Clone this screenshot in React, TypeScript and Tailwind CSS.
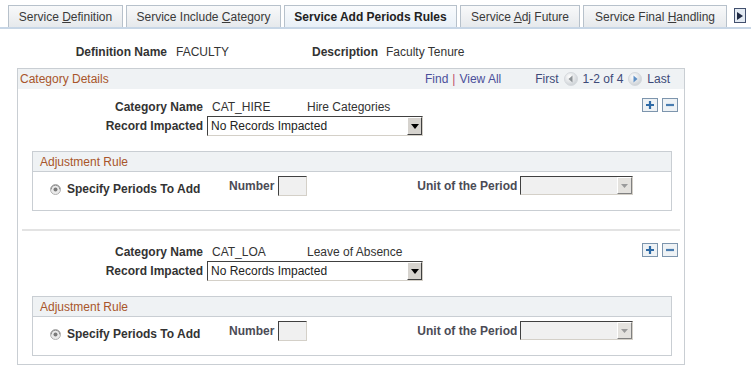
import React from "react";

type TabDef = { pre: string; key?: string; post: string; w: string; active?: boolean };

const tabs: TabDef[] = [
  { pre: "Service ", key: "D", post: "efinition", w: "w-[115px]" },
  { pre: "Service Include ", key: "C", post: "ategory", w: "w-[155px]" },
  { pre: "Service Add Periods Rules", post: "", w: "w-[173px]", active: true },
  { pre: "Service ", key: "A", post: "dj Future", w: "w-[120px]" },
  { pre: "Service Final ", key: "H", post: "andling", w: "w-[144px]" },
];

function Tab({ t }: { t: TabDef }) {
  return (
    <div
      className={`flex h-[22px] items-center justify-center border border-b-0 border-[#b7c1cb] text-[12px] ${t.w} ${
        t.active
          ? "bg-gradient-to-b from-[#f9fbfd] to-[#e9f0f7] font-bold text-[#222]"
          : "bg-gradient-to-b from-[#f8f9fa] to-[#e6e9ec] text-[#3a3a3a]"
      }`}
    >
      <span>
        {t.pre}
        {t.key && <u>{t.key}</u>}
        {t.post}
      </span>
    </div>
  );
}

function NavCircle({ dir }: { dir: "left" | "right" }) {
  return (
    <svg width="14" height="14" viewBox="0 0 14 14" className="mx-[5px]">
      <defs>
        <radialGradient id={`g-${dir}`} cx="40%" cy="35%" r="70%">
          <stop offset="0%" stopColor="#ffffff" />
          <stop offset="100%" stopColor="#c9ced3" />
        </radialGradient>
      </defs>
      <circle cx="7" cy="7" r="6.5" fill={`url(#g-${dir})`} stroke="#d5d9dd" />
      {dir === "left" ? (
        <path d="M8.5 3.5 L4.5 7 L8.5 10.5 Z" fill="#8d9296" />
      ) : (
        <path d="M5.5 3.5 L9.5 7 L5.5 10.5 Z" fill="#5e8fc5" />
      )}
    </svg>
  );
}

function PlusMinus() {
  return (
    <div className="flex gap-[4px]">
      <div className="flex h-[14px] w-[16px] items-center justify-center border border-[#7d95ad] bg-[#eef2f5]">
        <svg width="10" height="10" viewBox="0 0 10 10">
          <path d="M5 1v8M1 5h8" stroke="#2e6aa6" strokeWidth="2.2" />
        </svg>
      </div>
      <div className="flex h-[14px] w-[16px] items-center justify-center border border-[#7d95ad] bg-[#eef2f5]">
        <svg width="10" height="10" viewBox="0 0 10 10">
          <path d="M1 5h8" stroke="#4a7db0" strokeWidth="2.2" />
        </svg>
      </div>
    </div>
  );
}

function RecordSelect() {
  return (
    <div className="flex h-[20px] w-[216px] border border-t-[#404040] border-l-[#404040] border-b-[#d4d0c8] border-r-[#d4d0c8] bg-white">
      <div className="flex flex-1 items-center pl-[3px] text-[12px] text-[#222]">No Records Impacted</div>
      <div className="flex w-[15px] items-center justify-center border border-t-white border-l-white border-b-[#404040] border-r-[#404040] bg-[#d6d3ce]">
        <svg width="8" height="5" viewBox="0 0 8 5">
          <path d="M0 0h8L4 5z" fill="#000" />
        </svg>
      </div>
    </div>
  );
}

function UnitSelect() {
  return (
    <div className="flex h-[19px] w-[113px] border border-t-[#404040] border-l-[#404040] border-b-[#d4d0c8] border-r-[#d4d0c8] bg-[#f0f0f0]">
      <div className="flex-1" />
      <div className="flex w-[15px] items-center justify-center border border-t-white border-l-white border-b-[#808080] border-r-[#808080] bg-[#e4e2de]">
        <svg width="7" height="4" viewBox="0 0 7 4">
          <path d="M0 0h7L3.5 4z" fill="#9a9a9a" />
        </svg>
      </div>
    </div>
  );
}

function RadioDot() {
  return (
    <svg width="11" height="11" viewBox="0 0 11 11">
      <circle cx="5.5" cy="5.5" r="5" fill="#eaeaea" stroke="#b0b0b0" />
      <path d="M1.2 5.5a4.3 4.3 0 0 1 8.6 0" fill="none" stroke="#8a8a8a" strokeWidth="1" />
      <circle cx="5.5" cy="5.5" r="2" fill="#7a7a7a" />
    </svg>
  );
}

function AdjustmentRule() {
  return (
    <div className="ml-[14px] mr-[12px] border border-[#c9ced3]">
      <div className="flex h-[20px] items-center border-b border-[#c9ced3] bg-[#eff2f4] pl-[7px] text-[12px] text-[#a8552a]">
        Adjustment Rule
      </div>
      <div className="flex h-[38px] items-start pt-[4px]">
        <div className="ml-[17px] mt-[4px] flex w-[179px] items-center gap-[6px]">
          <RadioDot />
          <span className="text-[12px] font-bold text-[#333]">Specify Periods To Add</span>
        </div>
        <div className="flex items-center gap-[4px]">
          <span className="text-[12px] font-bold text-[#4b4b55]">Number</span>
          <div className="h-[20px] w-[29px] border border-t-[#404040] border-l-[#404040] border-b-[#d4d0c8] border-r-[#d4d0c8] bg-[#f0f0f0]" />
        </div>
        <div className="flex w-[210px] items-center justify-end pt-[1px] text-[12px] font-bold text-[#4b4b55]">
          Unit of the Period
        </div>
        <div className="ml-[3px]">
          <UnitSelect />
        </div>
      </div>
    </div>
  );
}

function CategoryBlock({ code, desc }: { code: string; desc: string }) {
  return (
    <div>
      <div className="flex h-[18px] items-center">
        <div className="w-[185px] text-right text-[12px] font-bold text-[#333]">Category Name</div>
        <div className="ml-[9px] w-[95px] text-[12px] text-[#333]">{code}</div>
        <div className="text-[12px] text-[#333]">{desc}</div>
        <div className="ml-auto mr-[6px] self-start">
          <PlusMinus />
        </div>
      </div>
      <div className="flex h-[20px] items-center">
        <div className="w-[185px] text-right text-[12px] font-bold text-[#333]">Record Impacted</div>
        <div className="ml-[4px]">
          <RecordSelect />
        </div>
      </div>
      <div className="mt-[15px]">
        <AdjustmentRule />
      </div>
    </div>
  );
}

export default function App() {
  return (
    <div className="h-[373px] w-[751px] overflow-hidden bg-white font-['Liberation_Sans',Arial,sans-serif] text-[#333]">
      {/* Tabs */}
      <div className="flex items-end gap-[3px] border-b-2 border-[#c7d6e6] pl-[8px] pt-[5px]">
        {tabs.map((t) => (
          <Tab key={t.pre + t.post} t={t} />
        ))}
        <div className="mb-[4px] ml-[4px] flex h-[15px] w-[12px] items-center justify-center border border-[#42506e] bg-[#e3eaf2]">
          <svg width="6" height="8" viewBox="0 0 6 8">
            <path d="M0 0l6 4-6 4z" fill="#1f2a44" />
          </svg>
        </div>
      </div>

      {/* Definition */}
      <div className="mt-[15px] flex h-[16px] items-center text-[12px]">
        <div className="w-[167px] text-right font-bold text-[#333]">Definition Name</div>
        <div className="ml-[9px] w-[136px] text-[#333]">FACULTY</div>
        <div className="w-[65px] text-right font-bold text-[#333]">Description</div>
        <div className="ml-[9px] text-[#333]">Faculty Tenure</div>
      </div>

      {/* Category Details grid */}
      <div className="ml-[17px] mt-[8px] h-[297px] w-[668px] border border-[#c9ced3]">
        <div className="flex h-[20px] items-center bg-[#eff2f4] text-[12px]">
          <span className="pl-[2px] text-[#a8552a]">Category Details</span>
          <span className="ml-auto text-[#4b4f9a]">Find</span>
          <span className="mx-[4px] text-[#c0506a]">|</span>
          <span className="text-[#4b4f9a]">View All</span>
          <span className="ml-[34px] flex items-center text-[#3d4a78]">
            First
            <NavCircle dir="left" />
            1-2 of 4
            <NavCircle dir="right" />
            Last
          </span>
          <span className="w-[14px]" />
        </div>

        <div className="pt-[9px]">
          <CategoryBlock code="CAT_HIRE" desc="Hire Categories" />
        </div>

        <div className="mx-[4px] mt-[18px] h-[2px] bg-[#e3e3e3]" />

        <div className="pt-[12px]">
          <CategoryBlock code="CAT_LOA" desc="Leave of Absence" />
        </div>
      </div>
    </div>
  );
}
